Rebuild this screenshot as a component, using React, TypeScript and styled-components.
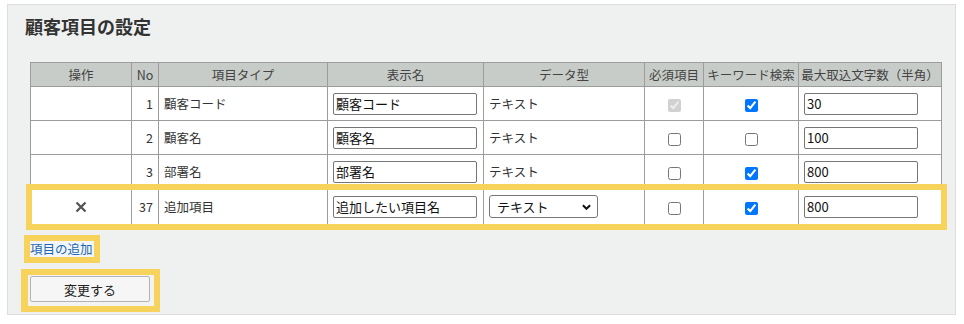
import React from 'react'
import styled, { createGlobalStyle } from 'styled-components'

const GlobalStyle = createGlobalStyle`
  html, body {
    margin: 0;
    padding: 0;
    background: #fff;
  }
  body {
    font-family: "Noto Sans CJK JP", "Noto Sans", sans-serif;
    color: #333;
  }
`

type Field = {
  id: number
  type: string
  label: string
  required: boolean
  requiredLocked?: boolean
  keyword: boolean
  max: string
  added?: boolean
}

const fields: Field[] = [
  { id: 1, type: '顧客コード', label: '顧客コード', required: true, requiredLocked: true, keyword: true, max: '30' },
  { id: 2, type: '顧客名', label: '顧客名', required: false, keyword: false, max: '100' },
  { id: 3, type: '部署名', label: '部署名', required: false, keyword: true, max: '800' },
  { id: 37, type: '追加項目', label: '追加したい項目名', required: false, keyword: true, max: '800', added: true },
]

const columns = [
  { title: '操作', width: 101 },
  { title: 'No', width: 27 },
  { title: '項目タイプ', width: 169 },
  { title: '表示名', width: 156 },
  { title: 'データ型', width: 161 },
  { title: '必須項目', width: 59 },
  { title: 'キーワード検索', width: 95 },
  { title: '最大取込文字数（半角）', width: 143 },
]

const App = () => {
  return (
    <>
      <GlobalStyle />
      <Page>
        <Panel>
          <Title>顧客項目の設定</Title>
          <Body>
            <Table>
              <colgroup>
                {columns.map(c => (
                  <col key={c.title} style={{ width: c.width }} />
                ))}
              </colgroup>
              <thead>
                <tr>
                  {columns.map(c => (
                    <Th key={c.title}>{c.title}</Th>
                  ))}
                </tr>
              </thead>
              <tbody>
                {fields.map(f => (
                  <Row key={f.id} highlighted={f.added}>
                    <Td align="center">
                      {f.added && (
                        <DeleteIcon viewBox="0 0 12 12">
                          <path d="M1.5 1.5 L10.5 10.5 M10.5 1.5 L1.5 10.5" />
                        </DeleteIcon>
                      )}
                    </Td>
                    <Td align="right">{f.id}</Td>
                    <Td>{f.type}</Td>
                    <Td>
                      <TextInput width={144} defaultValue={f.label} />
                    </Td>
                    <Td>
                      {f.added ? (
                        <SelectWrap>
                          <Select defaultValue="text">
                            <option value="text">テキスト</option>
                          </Select>
                          <Chevron viewBox="0 0 10 6">
                            <path d="M1 1 L5 5 L9 1" />
                          </Chevron>
                        </SelectWrap>
                      ) : (
                        'テキスト'
                      )}
                    </Td>
                    <Td align="center">
                      <Check type="checkbox" defaultChecked={f.required} disabled={f.requiredLocked} />
                    </Td>
                    <Td align="center">
                      <Check type="checkbox" defaultChecked={f.keyword} />
                    </Td>
                    <Td>
                      <TextInput width={114} defaultValue={f.max} />
                    </Td>
                  </Row>
                ))}
              </tbody>
            </Table>
            <Marked>
              <AddLink href="#">項目の追加</AddLink>
            </Marked>
            <ButtonMark>
              <SubmitButton type="button">変更する</SubmitButton>
            </ButtonMark>
          </Body>
        </Panel>
      </Page>
    </>
  )
}

export default App

const Page = styled.div`
  padding: 4px 8px 9px 7px;
`

const Panel = styled.section`
  width: 947px;
  height: 309px;
  background: #eff1f0;
  border: 1px solid #dcdedd;
`

const Title = styled.h1`
  margin: 0;
  padding: 8px 0 0 17px;
  font-size: 18px;
  line-height: 27px;
  font-weight: bold;
  color: #333;
`

const Body = styled.div`
  padding: 22px 14px 0 22px;
`

const Table = styled.table`
  width: 911px;
  table-layout: fixed;
  border-collapse: collapse;
  background: #fff;
  font-size: 12.5px;
`

const Th = styled.th`
  height: 23px;
  padding: 0;
  background: #c8ccc8;
  border: 1px solid #9c9c9c;
  font-weight: normal;
  color: #444;
  text-align: center;
  white-space: nowrap;
  overflow: hidden;
`

const Row = styled.tr<{ highlighted?: boolean }>`
  height: ${p => (p.highlighted ? 36 : 34)}px;
  outline: ${p => (p.highlighted ? '6px solid #f7d35c' : 'none')};
  outline-offset: -1px;
`

const Td = styled.td<{ align?: 'left' | 'center' | 'right' }>`
  padding: 0 5px;
  border: 1px solid #9c9c9c;
  text-align: ${p => p.align || 'left'};
  vertical-align: middle;
  color: #333;
  white-space: nowrap;
`

const TextInput = styled.input<{ width: number }>`
  box-sizing: border-box;
  width: ${p => p.width}px;
  height: 22px;
  margin: 0;
  padding: 0 2px;
  border: 1px solid #767676;
  border-radius: 2px;
  font-family: inherit;
  font-size: 13px;
  color: #111;
  background: #fff;
`

const SelectWrap = styled.div`
  position: relative;
  display: inline-block;
`

const Select = styled.select`
  box-sizing: border-box;
  width: 109px;
  height: 23px;
  margin: 0;
  padding: 0 0 0 7px;
  appearance: none;
  border: 1px solid #767676;
  border-radius: 3px;
  background: #fff;
  font-family: inherit;
  font-size: 13px;
  color: #111;
`

const Chevron = styled.svg`
  position: absolute;
  right: 7px;
  top: 9px;
  width: 9px;
  height: 6px;
  pointer-events: none;
  fill: none;
  stroke: #111;
  stroke-width: 2.2;
`

const DeleteIcon = styled.svg`
  width: 12px;
  height: 12px;
  display: block;
  margin: 0 auto;
  fill: none;
  stroke: #555;
  stroke-width: 2.3;
`

const Check = styled.input`
  width: 13px;
  height: 13px;
  margin: 0;
  vertical-align: middle;
`

const Marked = styled.div`
  display: inline-block;
  margin: 10px 0 0 -6px;
  border: 6px solid #f7d35c;
  background: #f3f6f8;
`

const AddLink = styled.a`
  display: block;
  padding: 0 1px 0 0;
  line-height: 16px;
  font-size: 12.5px;
  color: #2067b4;
  text-decoration: none;
`

const ButtonMark = styled.div`
  display: block;
  width: fit-content;
  margin: 6px 0 0 -9px;
  padding: 1px 4px 4px 2px;
  border: 6px solid #f7d35c;
  border-left-width: 7px;
  background: #f2f4f3;
`

const SubmitButton = styled.button`
  display: block;
  width: 120px;
  height: 26px;
  margin: 0;
  border: 1px solid #b3b3b3;
  border-radius: 2px;
  background: #f5f6f5;
  font-family: inherit;
  font-size: 13px;
  color: #222;
`
